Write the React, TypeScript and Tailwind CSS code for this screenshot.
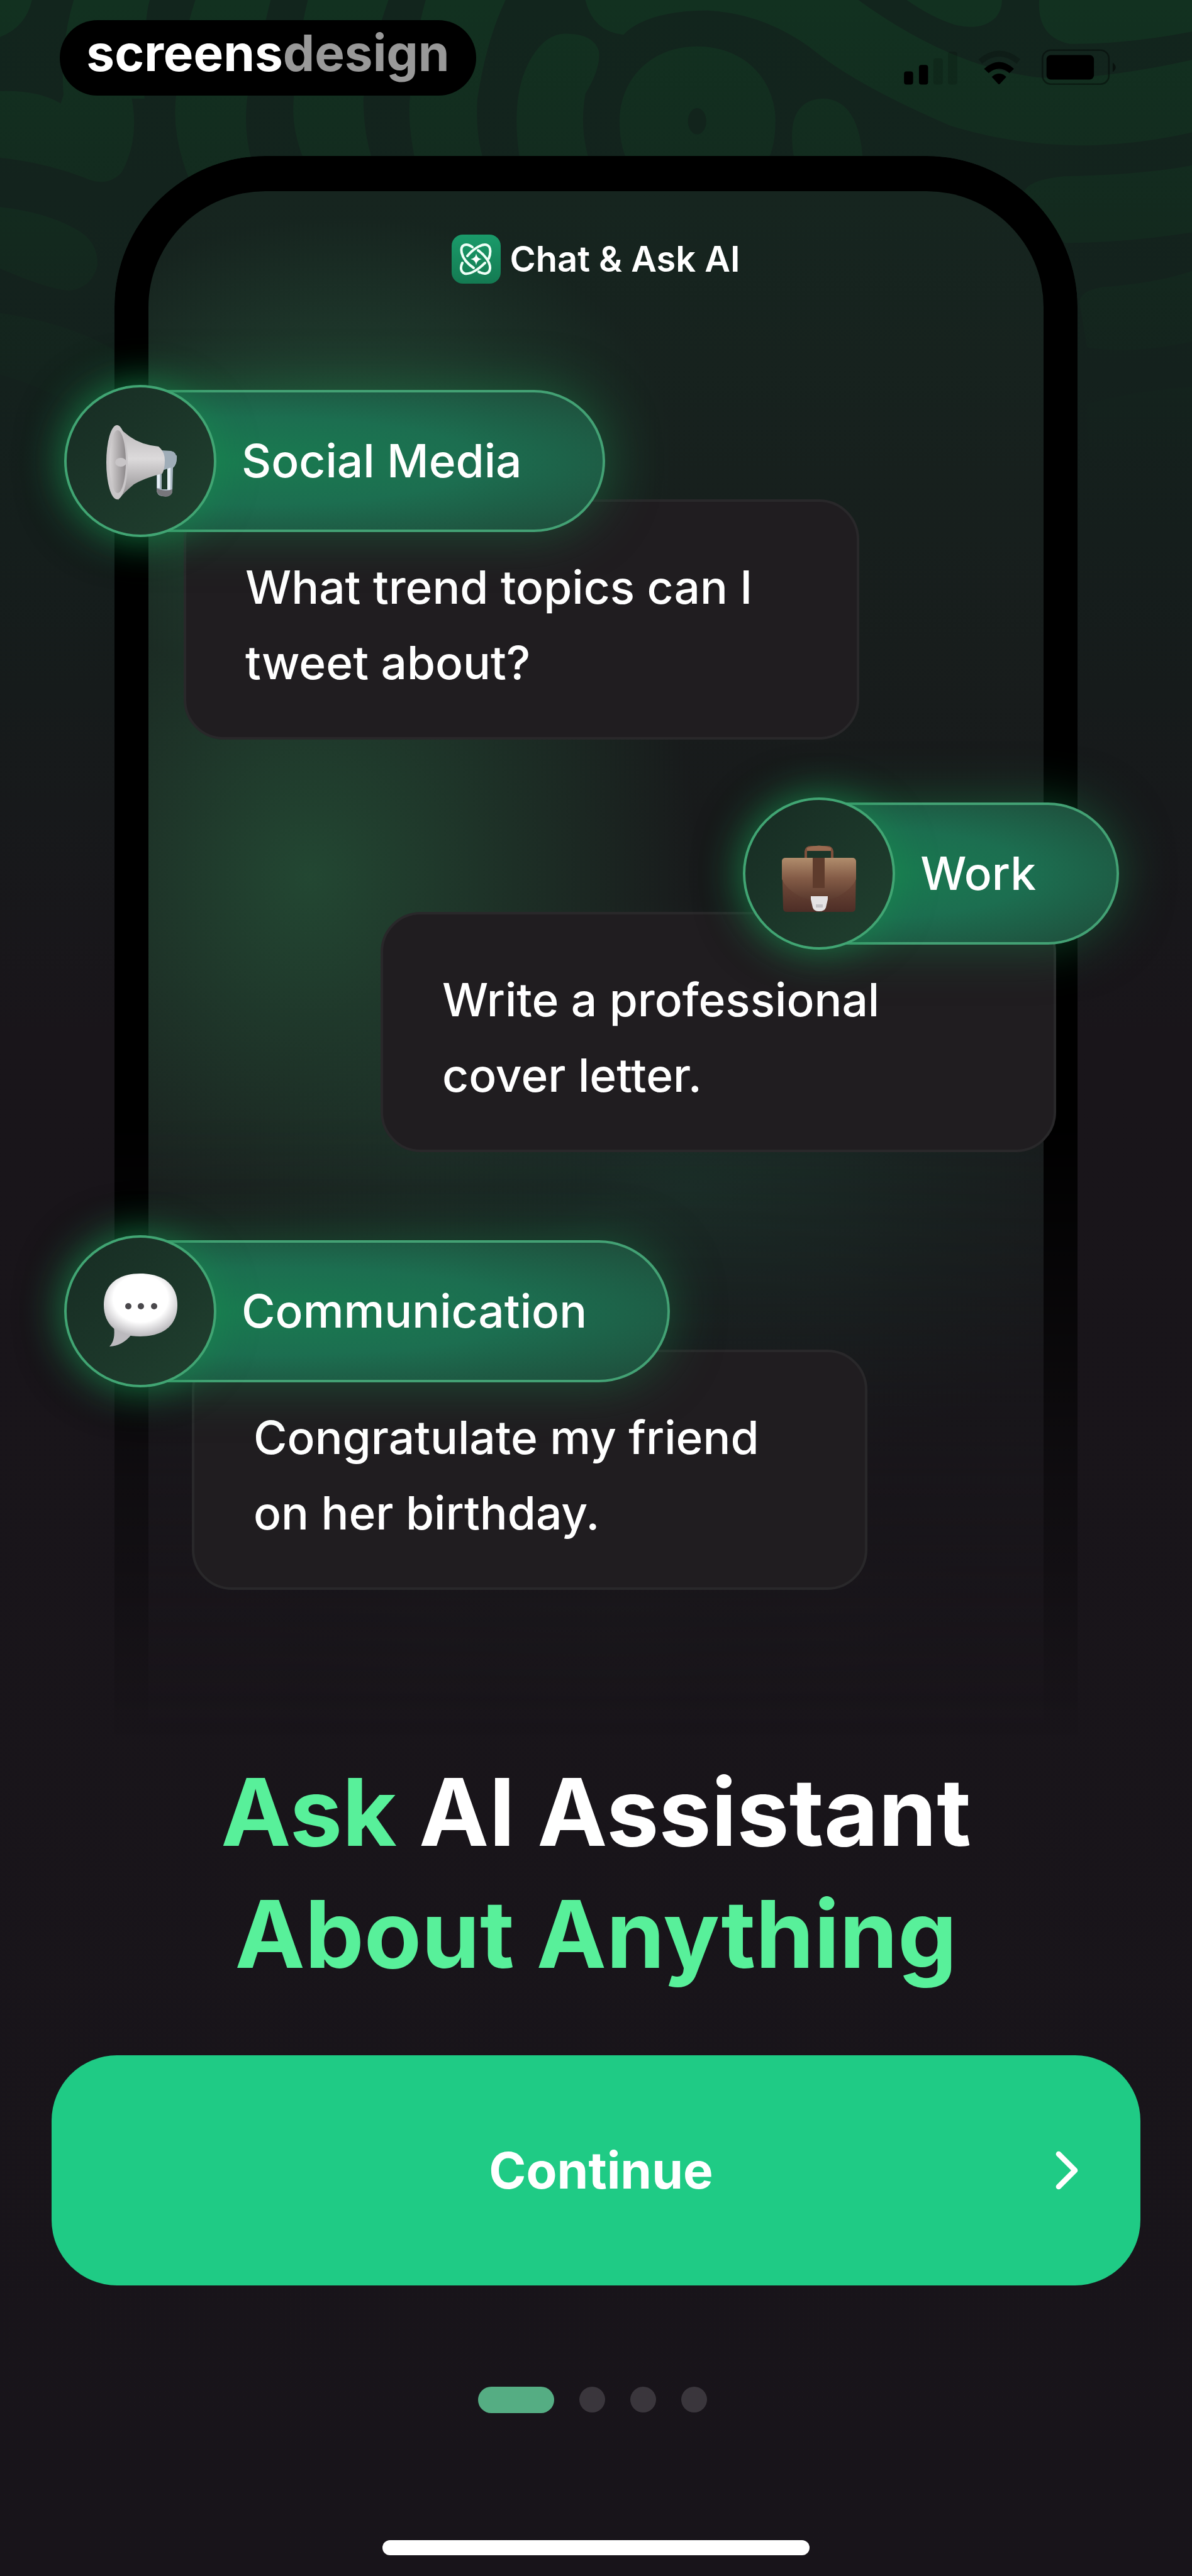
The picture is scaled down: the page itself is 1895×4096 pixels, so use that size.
import type { ReactNode } from "react";
import { ChevronRight } from "lucide-react";
import clsx from "clsx";

interface Suggestion {
    id: string;
    topic: string;
    prompt: [string, string];
    icon: ReactNode;
    groupClassName: string;
    cardClassName: string;
}

function SignalIcon() {
    return (
        <svg className="h-[58px] w-[85px]" viewBox="113 88 292 200" aria-hidden="true">
            <rect x="113" y="210" width="50" height="73" rx="14" />
            <rect x="195" y="175" width="50" height="108" rx="14" />
            <rect x="274" y="139" width="52" height="144" rx="14" opacity="0.14" />
            <rect x="354" y="102" width="51" height="181" rx="14" opacity="0.14" />
        </svg>
    );
}

function WifiIcon() {
    return (
        <svg className="h-[58px] w-[69px]" viewBox="513 88 238 200" aria-hidden="true">
            <path
                d="M528 156 Q632 70 738 156"
                fill="none"
                stroke="#000"
                strokeWidth="32"
                opacity="0.2"
            />
            <path d="M549 197 Q632 121 713 197 L688 220 Q632 172 574 220 Z" />
            <path d="M591 241 Q632 204 671 241 L637 278 Q631 284 625 278 Z" />
        </svg>
    );
}

function BatteryIcon() {
    return (
        <svg className="h-[58px] w-[120px]" viewBox="858 88 410 200" aria-hidden="true">
            <rect
                x="864"
                y="94"
                width="364"
                height="186"
                rx="46"
                fill="none"
                stroke="#000"
                strokeWidth="9"
                opacity="0.4"
            />
            <rect x="886" y="121" width="260" height="134" rx="24" />
            <path d="M1249 162 Q1282 188 1249 214 Z" opacity="0.5" />
        </svg>
    );
}

function AppIcon() {
    return (
        <svg className="size-[78px]" viewBox="0 0 78 78" aria-hidden="true">
            <defs>
                <linearGradient id="app-tile" x1="0" y1="0" x2="0" y2="1">
                    <stop offset="0" stopColor="#1a9b6a" />
                    <stop offset="1" stopColor="#147a52" />
                </linearGradient>
            </defs>
            <rect width="78" height="78" rx="18" fill="url(#app-tile)" />
            <g fill="none" stroke="#effff7" strokeWidth="4" strokeLinecap="round">
                <path d="M33 20 C24 13 13 15 16 29 C18 38 26 47 35 53" />
                <path d="M42 25 C52 32 62 44 61 54 C60 63 51 64 43 59" />
                <path d="M25 34 C34 23 49 13 57 17 C63 20 62 31 59 38" />
                <path d="M17 45 C13 53 15 60 21 62 C30 64 44 54 53 45" />
            </g>
            <path
                d="M39 30 Q40 38 48 39 Q40 40 39 49 Q38 40 30 39 Q38 38 39 30 Z"
                fill="#fff"
            />
        </svg>
    );
}

function MegaphoneIcon() {
    return (
        <svg className="size-[120px] overflow-visible" viewBox="-5 -3 120 120" aria-hidden="true">
            <defs>
                <linearGradient id="horn" x1="0" y1="0" x2="0" y2="1">
                    <stop offset="0" stopColor="#b9b6b8" />
                    <stop offset="0.45" stopColor="#dcdadb" />
                    <stop offset="1" stopColor="#8a8789" />
                </linearGradient>
                <linearGradient id="horn-mouth" x1="0" y1="0" x2="1" y2="0">
                    <stop offset="0" stopColor="#d6d3d4" />
                    <stop offset="1" stopColor="#8d898b" />
                </linearGradient>
            </defs>
            {/* Grip: two steel bars joined at the bottom */}
            <path d="M81 74 H89 V102 H98 V56 L113 48 Q114 62 107 68 L106 106 Q104 113 96 113 H90 Q82 112 81 104 Z" fill="#a9b7c2" />
            <path d="M98 66 H103 V103 H98 Z M82 78 H86 V100 H82 Z" fill="#e6eef5" />
            <path d="M81 100 Q94 107 106 102 V107 Q103 114 95 114 Q82 112 81 104 Z" fill="#77767b" />
            <path d="M88 40 L104 41 Q113 43 113 54 L108 66 L90 72 Z" fill="#9fadb8" />
            <path
                d="M18 0 Q27 10 38 18 Q56 31 84 34 Q94 42 94 56 Q94 70 90 77 Q62 84 45 94 Q28 108 20 119 Q10 112 18 0 Z"
                fill="url(#horn)"
            />
            <ellipse cx="18" cy="59" rx="17" ry="59" fill="#c9c6c8" />
            <ellipse cx="19" cy="58" rx="13" ry="50" fill="url(#horn-mouth)" />
            <ellipse cx="24" cy="59" rx="9" ry="7" fill="#c8c5c7" />
        </svg>
    );
}

function BriefcaseIcon() {
    return (
        <svg className="size-[120px] overflow-visible" viewBox="-1 -15 120 120" aria-hidden="true">
            <defs>
                <linearGradient id="case-body" x1="0" y1="0" x2="0" y2="1">
                    <stop offset="0" stopColor="#8c6047" />
                    <stop offset="1" stopColor="#4d2d26" />
                </linearGradient>
                <linearGradient id="case-flap" x1="0" y1="0" x2="0" y2="1">
                    <stop offset="0" stopColor="#b08c6c" />
                    <stop offset="0.5" stopColor="#835b46" />
                    <stop offset="1" stopColor="#5c3b2f" />
                </linearGradient>
            </defs>
            <path
                d="M38 20 V10 Q39 3 46 3 H72 Q79 3 80 10 V20"
                fill="none"
                stroke="#7d503c"
                strokeWidth="4"
            />
            <path d="M40 4 Q59 -3 78 4 V9 H40 Z" fill="#9a6a50" />
            <path
                d="M0 26 Q0 20 6 20 H112 Q118 20 118 26 L117 100 Q117 106 111 106 H8 Q2 106 2 100 Z"
                fill="url(#case-body)"
            />
            <path
                d="M0 26 Q0 20 6 20 H112 Q118 20 118 28 V54 Q112 68 92 80 Q84 85 72 86 H46 Q34 85 26 80 Q6 68 0 54 Z"
                fill="url(#case-flap)"
            />
            <rect x="49" y="20" width="19" height="48" fill="#5e3b2c" />
            <path d="M46 81 H73 V86 L70 99 Q68 105 59 105 Q51 105 49 99 L46 86 Z" fill="#e4e2e4" />
            <path d="M54 94 H65 V99 H54 Z" fill="#c4c2c6" />
        </svg>
    );
}

function SpeechIcon() {
    return (
        <svg className="size-[120px] overflow-visible" viewBox="-2 0 120 120" aria-hidden="true">
            <defs>
                <radialGradient id="bubble" cx="0.5" cy="0.4" r="0.62">
                    <stop offset="0.6" stopColor="#ffffff" />
                    <stop offset="1" stopColor="#b5b3b7" />
                </radialGradient>
            </defs>
            <path d="M16 84 Q19 106 9 116 Q30 115 44 97 Z" fill="#bcbabe" />
            <path
                d="M58 0 C95 0 117 18 117 50 C117 82 95 100 58 100 C22 100 0 82 0 50 C0 18 22 0 58 0 Z"
                fill="url(#bubble)"
            />
            <g fill="#4a484c">
                <circle cx="39" cy="52" r="5" />
                <circle cx="59" cy="52" r="5" />
                <circle cx="80" cy="52" r="5" />
            </g>
        </svg>
    );
}

/** Flowing leaf-like pattern behind the status bar, fading towards the middle. */
function BackdropPattern() {
    return (
        <svg
            className="absolute inset-x-0 top-0 h-[768px] w-full"
            viewBox="0 0 1568 1960"
            preserveAspectRatio="none"
            aria-hidden="true"
        >
            <defs>
                <linearGradient id="leaf" gradientUnits="userSpaceOnUse" x1="0" y1="0" x2="0" y2="1960">
                    <stop offset="0" stopColor="#123120" />
                    <stop offset="0.5" stopColor="#13291e" />
                    <stop offset="1" stopColor="#14231d" stopOpacity="0" />
                </linearGradient>
            </defs>
            <g fill="url(#leaf)">
                <path d="M0 0 H42 Q34 110 0 150 Z" />
                <path d="M97 0 H197 Q188 90 190 400 H84 Q78 200 97 0 Z" />
                <path d="M0 370 Q50 365 80 420 L84 380 H172 Q185 560 160 700 Q140 765 110 720 Q60 660 0 640 Z" />
                <path d="M257 0 H356 Q340 200 325 400 Q320 540 332 660 L248 720 Q225 540 232 380 Q238 180 257 0 Z" />
                <path d="M405 0 H511 Q490 180 478 400 Q478 540 490 650 H400 Q380 500 388 360 Q392 160 405 0 Z" />
                <path d="M560 0 H665 Q640 160 628 400 Q625 540 636 650 H546 Q535 480 540 380 Q545 160 560 0 Z" />
                <path d="M684 650 Q670 380 700 230 Q720 130 748 137 Q782 140 788 210 Q790 280 770 380 Q762 520 775 650 Z" />
                <path d="M770 0 Q780 128 820 141 Q850 45 930 42 Q1010 55 1075 215 Q1130 350 1250 510 Q1400 655 1568 537 V243 Q1440 330 1364 314 Q1250 270 1129 0 Z" />
                <path d="M1193 0 Q1225 70 1254 98 Q1290 130 1310 70 Q1318 40 1318 0 Z" />
                <path d="M1367 0 Q1364 150 1407 178 Q1480 180 1568 128 V0 Z" />
                <path d="M917 188 C985 190 1020 340 1020 490 Q1020 590 1010 650 H825 Q815 590 815 490 C815 340 850 190 917 188 Z" />
                <path d="M1045 650 Q1030 400 1085 400 Q1130 410 1135 650 Z" />
                <path d="M1346 786 Q1350 730 1400 715 Q1500 710 1568 671 V943 Q1480 985 1401 986 Z" />
                <path d="M1420 1228 Q1420 1180 1450 1165 Q1520 1150 1568 1100 V1386 Q1490 1440 1430 1410 Z" />
                <path d="M1430 1640 Q1500 1580 1568 1570 V1850 Q1490 1890 1430 1850 Z" />
                <path d="M0 840 Q60 860 100 930 Q130 980 128 1080 Q120 1170 90 1180 Q60 1170 0 1090 Z" />
                <path d="M0 1270 Q90 1310 150 1420 V1760 Q90 1600 0 1520 Z" />
            </g>
            <ellipse cx="917" cy="492" rx="12" ry="53" fill="#12241c" />
        </svg>
    );
}

const suggestions: Suggestion[] = [
    {
        id: "social",
        topic: "Social Media",
        prompt: ["What trend topics can I", "tweet about?"],
        icon: <MegaphoneIcon />,
        groupClassName: "items-start",
        cardClassName: "ml-[190px]",
    },
    {
        id: "work",
        topic: "Work",
        prompt: ["Write a professional", "cover letter."],
        icon: <BriefcaseIcon />,
        groupClassName: "mt-[92px] items-end",
        cardClassName: "mr-[100px]",
    },
    {
        id: "communication",
        topic: "Communication",
        prompt: ["Congratulate my friend", "on her birthday."],
        icon: <SpeechIcon />,
        groupClassName: "mt-[132px] items-start",
        cardClassName: "ml-[203px]",
    },
];

function SuggestionGroup({ suggestion }: { suggestion: Suggestion }) {
    return (
        <li className={clsx("flex flex-col", suggestion.groupClassName)}>
            <div className="z-10 flex h-[241px] items-center">
                <div className="z-10 -mr-[242px] flex size-[242px] shrink-0 items-center justify-center rounded-full border-4 border-[#41a573] bg-linear-to-br from-[#172c23] to-[#20402f] shadow-[0_0_60px_2px_#178f4e99]">
                    {suggestion.icon}
                </div>
                <h2 className="ml-2 flex h-[226px] items-center rounded-full border-4 border-[#43a174] bg-[radial-gradient(ellipse_at_35%_50%,#197a50_0%,#1c6e50_45%,#1f4b3a_100%)] pr-[128px] pl-[270px] text-[73px] font-medium whitespace-nowrap text-white shadow-[0_0_80px_2px_#1a804a80]">
                    {suggestion.topic}
                </h2>
            </div>
            <p
                className={clsx(
                    "-mt-[59px] w-full max-w-[1074px] rounded-[64px] border-4 border-[#29282a] bg-[#201d20] px-[94px] pt-[76px] pb-[58px] text-[73px] leading-[120px] font-medium text-white",
                    suggestion.cardClassName,
                )}
            >
                {suggestion.prompt[0]}
                <br />
                {suggestion.prompt[1]}
            </p>
        </li>
    );
}

function StatusBar() {
    return (
        <header className="flex items-start justify-between pt-8 pr-[120px] pl-[95px]">
            <p className="flex h-[120px] w-[662px] justify-center rounded-full bg-black pt-1 text-[80px] leading-[96px] font-bold text-white">
                screens<span className="text-[#999]">design</span>
            </p>
            <div className="mt-[46px] flex gap-8">
                <SignalIcon />
                <WifiIcon />
                <BatteryIcon />
            </div>
        </header>
    );
}

function PhonePreview() {
    return (
        <section className="mt-24 grid">
            <div className="mx-[182px] rounded-t-[240px] border-x-[54px] border-t-[56px] border-black bg-[radial-gradient(ellipse_520px_380px_at_22%_17%,#2a5a40b3,transparent),radial-gradient(ellipse_620px_700px_at_18%_44%,#275a3cb3,transparent),radial-gradient(ellipse_700px_460px_at_60%_64%,#1c3a2fb3,transparent),radial-gradient(ellipse_600px_300px_at_50%_92%,#1c241fb3,transparent),linear-gradient(#16251f,#181a1b_40%,#18191b_70%,#18141a)] [grid-area:1/1] [mask-image:linear-gradient(#000_60%,#0006_82%,transparent_99%)]" />
            <div className="relative flex flex-col pt-[125px] pr-[116px] pb-[256px] pl-[102px] [grid-area:1/1]">
                <div className="flex items-center justify-center gap-[14px] pl-[14px] text-[56px] leading-[78px] font-semibold text-white">
                    <AppIcon />
                    Chat &amp; Ask AI
                </div>
                <ul className="mt-[161px]">
                    {suggestions.map((suggestion) => (
                        <SuggestionGroup key={suggestion.id} suggestion={suggestion} />
                    ))}
                </ul>
            </div>
        </section>
    );
}

function PageDots() {
    return (
        <div className="mt-[161px] flex justify-center gap-10 pr-3" role="img" aria-label="Page 1 of 4">
            <span className="h-[42px] w-[121px] rounded-full bg-[#55ad83]" />
            <span className="size-[41px] rounded-full bg-[#3a363c]" />
            <span className="size-[41px] rounded-full bg-[#3a363c]" />
            <span className="size-[41px] rounded-full bg-[#3a363c]" />
        </div>
    );
}

export default function App() {
    return (
        <main className="relative min-h-screen overflow-hidden bg-[#18141a] bg-[linear-gradient(#12251d_0px,#14211d_600px,#161b1b_1100px,#19151a_1650px,#18141a_100%)] font-['Inter',sans-serif]">
            <BackdropPattern />
            <div className="relative flex flex-col">
                <StatusBar />
                <PhonePreview />
                <h1 className="text-center text-[149px] leading-[194px] font-bold text-white">
                    <span className="text-[#58f09a]">Ask</span> AI Assistant
                    <br />
                    <span className="text-[#58f09a]">About Anything</span>
                </h1>
                <button
                    className="mx-[82px] mt-24 grid h-[366px] grid-cols-[1fr_auto_1fr] items-center rounded-[104px] bg-[#1fcb85] pl-4 text-[80px] font-bold text-white"
                    type="button"
                >
                    <span className="col-start-2">Continue</span>
                    <ChevronRight
                        className="mr-[65px] size-[104px] justify-self-end"
                        strokeWidth={2}
                        aria-hidden="true"
                    />
                </button>
                <PageDots />
                <div className="mx-auto mt-[202px] mb-[33px] h-6 w-[679px] rounded-full bg-white" />
            </div>
        </main>
    );
}
